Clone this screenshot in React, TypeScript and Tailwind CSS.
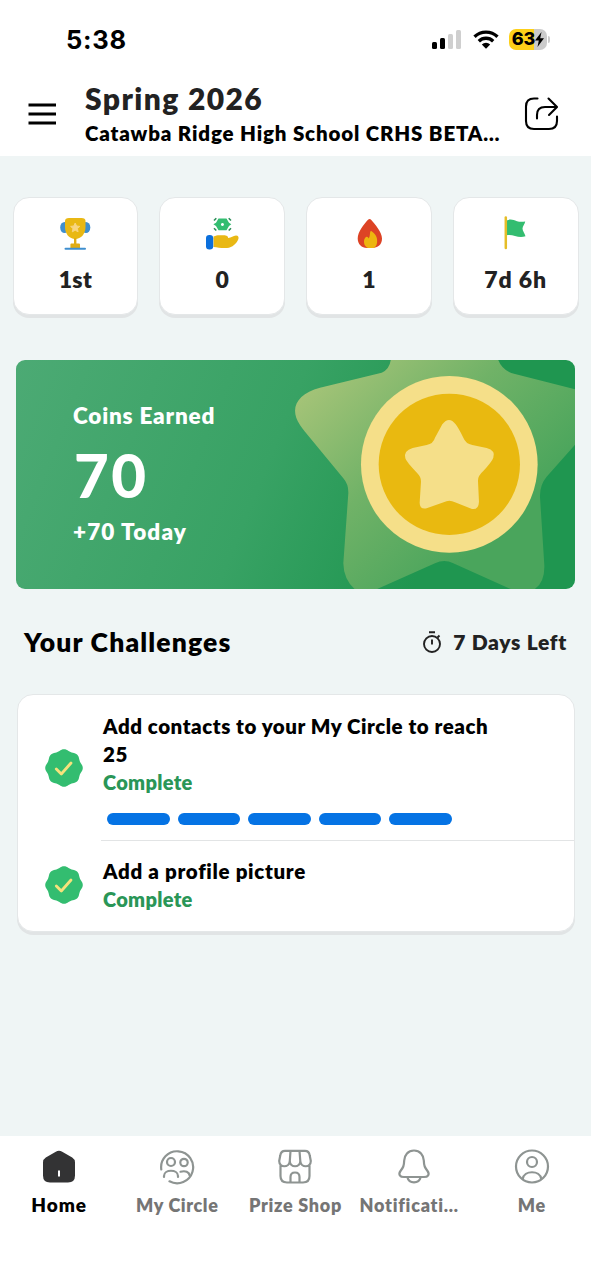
import React from "react";

const Trophy = () => (
  <svg className="h-10 w-10" viewBox="0 0 40 40">
    <ellipse cx="9.500" cy="13.500" rx="4.300" ry="5.500" fill="#3f8fcf" />
    <ellipse cx="31" cy="13.500" rx="4.300" ry="5.500" fill="#3f8fcf" />
    <path d="M10 7Q10 4 14 4H26.500Q30.500 4 30.500 7V13C30.500 20 26 25 20.200 25S10 20 10 13Z" fill="#e9b814" />
    <path d="M19 24h2.400v5.500H24q1 0 1 1v3.500H15.400v-3.500q0-1 1-1h2.600Z" fill="#e0ac14" />
    <path d="M10.500 34.800H30" stroke="#3f8fcf" strokeWidth="2" strokeLinecap="round" />
    <path d="M20.200 9l1.400 3 3.200.4-2.400 2.200.7 3.200-2.900-1.600-2.900 1.600.7-3.200-2.400-2.200 3.200-.4Z" fill="#f8d581" stroke="#f8d581" strokeWidth="1" strokeLinejoin="round" />
  </svg>
);

const MoneyHand = () => (
  <svg className="h-10 w-10" viewBox="0 0 40 40">
    <path fillRule="evenodd" d="M16.500 4.400h8l2.500 4.300 2.300 1.600-2.300 1.600-2.500 4.400h-8L14 11.900l-2.600-1.600L14 8.700Z M20.400 8.900a1.500 1.500 0 1 0 .1 0Z" fill="#33bd70" />
    <path d="M12 6.500l2.300-2.300M26.700 4.200L29 6.500M12 14.200l2.300 2.300M26.700 16.500l2.300-2.300" stroke="#2e8d59" strokeWidth="1.600" />
    <path d="M11.500 22.600C15 20.800 17 21.200 20 21.300c4 0 6 .5 6.200 2.600 3.300 0 4.800-2.400 7.800-2.500 2.300 0 3.200 1.800 2.200 4C34.500 29.300 30.500 33.600 25 33.900c-5 .3-9-.3-13.500-.9Z" fill="#e9b814" />
    <rect x="4" y="21" width="7.200" height="14.500" rx="3.300" fill="#0b6fdc" />
  </svg>
);

const Flame = () => (
  <svg className="h-10 w-10" viewBox="0 0 40 40">
    <path d="M19.300 5.600Q20.800 4.200 22.300 5.900C26 10 33 18 33 24.500 33 30.500 29 34 23 34h-5C12.500 34 8.700 30 8.700 24.500 8.700 18 15 10 19.300 5.600Z" fill="#dd4325" />
    <path d="M22.600 17.200c4.600 3 6 7 5.500 11-.3 3-1.900 5.800-4.200 5.800h-4.500c-2.600-.5-4.400-3.400-4.400-6.300 0-2.200.8-4 2.500-4.900 1-.4 1.600.4 2.100 1.700 1.500-2 1.200-4.600 1.600-6.600.2-.8.700-1.100 1.400-.7Z" fill="#edb50f" />
  </svg>
);

const Flag = () => (
  <svg className="h-10 w-10" viewBox="0 0 40 40">
    <path d="M10 6.800C15 4.500 17 6 21 7.300c3 .8 5.500.5 8.200.2-.2 2.500-2.600 4.700-2.700 7 0 2.500 2 4.500 3 7.700-3.500 1.200-7 .8-10.500-.2-3.500-1-6-1.200-9-.5Z" fill="#33bd70" />
    <path d="M9.800 3.500V34" stroke="#e5bd27" strokeWidth="2.500" strokeLinecap="round" />
  </svg>
);

const stats = [
  { icon: <Trophy />, label: "1st", cls: "tracking-[0.300px]" },
  { icon: <MoneyHand />, label: "0", cls: "" },
  { icon: <Flame />, label: "1", cls: "" },
  { icon: <Flag />, label: "7d 6h", cls: "tracking-[0.900px]" },
];

const scallop = Array.from({ length: 96 }, (_, i) => {
  const a = (i / 96) * Math.PI * 2;
  const r = 18 + 0.8 * Math.cos(8 * a);
  return `${(19 + r * Math.sin(a)).toFixed(2)},${(19 - r * Math.cos(a)).toFixed(2)}`;
}).join(" ");

const Badge = () => (
  <svg className="h-[38px] w-[38px] shrink-0" viewBox="0 0 38 38">
    <polygon points={scallop} fill="#33bd70" />
    <path d="M11.300 20l5 5 9.700-11" fill="none" stroke="#f6e27c" strokeWidth="2.800" strokeLinecap="round" strokeLinejoin="round" />
  </svg>
);

const line = {
  fill: "none",
  stroke: "#8e9492",
  strokeWidth: 2.2,
  strokeLinecap: "round" as const,
  strokeLinejoin: "round" as const,
};

const tabs = [
  {
    label: "Home",
    cls: "text-black text-[19px] tracking-[0.900px]",
    icon: (
      <svg className="h-9 w-9" viewBox="0 0 36 36">
        <path d="M14.800 2.800q3.200-1.900 6.400 0l10 5.800q2.800 1.700 2.800 5V26.500q0 7-7 7H9q-7 0-7-7V13.600q0-3.300 2.800-5Z" fill="#333334" />
        <path d="M18 21.500v6" stroke="#fff" strokeWidth="2" />
      </svg>
    ),
  },
  {
    label: "My Circle",
    cls: "text-[#757575] text-[18px] tracking-[0.600px]",
    icon: (
      <svg className="h-9 w-9" viewBox="0 0 36 36" {...line}>
        <path d="M2.300 20.500A16 16 0 1 1 10.500 32.300" />
        <circle cx="12" cy="13" r="4" />
        <circle cx="25" cy="13.500" r="3.700" />
        <path d="M5 28v-1c0-7 14-7 14 0v1M21.500 22.700c5-1.200 8.500 0 9.300 4" />
      </svg>
    ),
  },
  {
    label: "Prize Shop",
    cls: "text-[#757575] text-[18px] tracking-[0.700px]",
    icon: (
      <svg className="h-9 w-9" viewBox="0 0 36 36" {...line}>
        <path d="M8 1.800h20q4 0 4.700 4.500L33.800 12c0 7-10 7-10.500 0 0 7-10.500 7-10.500 0-.5 7-10.600 7-10.600 0L3.300 6.300Q4 1.800 8 1.800ZM13.500 2l-.7 10M22.500 2l.8 10M3.500 16.500V27q0 6.500 6.500 6.500h16q6.500 0 6.500-6.500V16.500M13.500 33.500V28q0-4.500 4.500-4.500t4.500 4.500v5.500" />
      </svg>
    ),
  },
  {
    label: "Notificati…",
    cls: "text-[#757575] text-[18px] tracking-[0.750px] pr-[9px]",
    icon: (
      <svg className="h-9 w-9" viewBox="0 0 36 36" {...line}>
        <path d="M18 1.500c-6 0-9.500 4.500-9.800 10-.2 5.500-1 7-3.700 10.500-2.500 3.500-.5 6 3.500 6h20c4 0 6-2.500 3.500-6-2.700-3.500-3.500-5-3.700-10.500C27.500 6 24 1.500 18 1.500ZM11.500 28.500c1.500 6.500 11.500 6.500 13 0" />
      </svg>
    ),
  },
  {
    label: "Me",
    cls: "text-[#757575] text-[18px] tracking-[0.800px]",
    icon: (
      <svg className="h-9 w-9" viewBox="0 0 36 36" {...line}>
        <circle cx="18" cy="17.500" r="16" />
        <circle cx="18" cy="13" r="5" />
        <path d="M8.800 30c1-9 17.400-9 18.400 0" />
      </svg>
    ),
  },
];

const StatusBar = () => (
  <div className="flex h-20 items-start justify-between pt-[25px] pr-[41px] pl-[66px]">
    <span className="font-['Inter'] text-[25.500px] leading-[30px] font-bold tracking-[0.700px]">5:38</span>
    <div className="flex h-[30px] items-center">
      <svg className="h-[22px] w-[30px]" viewBox="0 0 30 22">
        <rect x="0" y="13" width="5" height="7" rx="1.500" />
        <rect x="8" y="9" width="5" height="11" rx="1.500" />
        <rect x="16" y="5" width="5" height="15" rx="1.500" fill="#cfcfcf" />
        <rect x="24" y="1" width="5" height="19" rx="1.500" fill="#cfcfcf" />
      </svg>
      <svg className="-mt-[2px] ml-[11px] h-[19px] w-[26px]" viewBox="0 0 26 19">
        <path d="M1.500 6.800a16.500 16.500 0 0 1 23 0M5.800 11.200a10.300 10.300 0 0 1 14.400 0" fill="none" stroke="#000" strokeWidth="3.300" />
        <path d="M8.800 14.400a6 6 0 0 1 8.400 0L13 18.700Z" />
      </svg>
      <div className="-mt-[2px] ml-[10px] flex h-[21px] w-[38px] items-center justify-center rounded-[7px] bg-linear-to-r from-[#fdd019] from-65% to-[#cbcbcb] to-65%">
        <span className="font-['Inter'] text-[18px] leading-none font-extrabold">63</span>
        <svg className="h-[15px] w-[9px]" viewBox="0 0 9 15">
          <path d="M6.500 0L0 8.500h3.800L2.500 15 9 6.300H5.200Z" />
        </svg>
      </div>
      <div className="-mt-[2px] ml-px h-[7px] w-[2px] rounded-r-full bg-[#cbcbcb]" />
    </div>
  </div>
);

export default function App() {
  return (
    <div className="flex h-[1280px] w-[591px] flex-col overflow-hidden bg-[#eff5f5] font-['Lato',sans-serif] font-extrabold text-black">
      <header className="h-[156px] shrink-0 bg-white">
        <StatusBar />
        <div className="flex">
          <svg className="mt-[23px] ml-[28px] h-[22px] w-7" viewBox="0 0 28 22">
            <path d="M.5 2h27.500M.5 11h27.500M.5 20h27.500" stroke="#000" strokeWidth="2.800" />
          </svg>
          <div className="ml-[29px] w-[438px]">
            <h1 className="text-[30px] leading-9 tracking-[1.400px] whitespace-nowrap text-[#222]">Spring 2026</h1>
            <p className="mt-1 text-[20.500px] leading-[26px] tracking-[0.840px] whitespace-nowrap">Catawba Ridge High School CRHS BETA…</p>
          </div>
          <svg className="mt-[16px] h-9 w-9" viewBox="0 0 36 36" fill="none" stroke="#000" strokeWidth="2.100" strokeLinecap="round" strokeLinejoin="round">
            <path d="M14.500 2.500H11Q3 2.500 3 10.500V25q0 8 8 8h15q8 0 8-8v-4.500M14 22.500v-3.500q0-8 8-8h11.500M25.500 2.500l8.500 8.500-8 8" />
          </svg>
        </div>
      </header>

      <main className="flex-1">
        <section className="mt-[41px] grid grid-cols-4 gap-x-[21px] px-[12.500px]">
          {stats.map((s) => (
            <div key={s.label} className="flex h-[118px] flex-col items-center rounded-2xl border border-[#e4e7e8] bg-white pt-[16px] shadow-[0_3px_0_#e1e4e5]">
              {s.icon}
              <span className={"mt-[11px] text-[23px] leading-7 text-[#222] " + s.cls}>{s.label}</span>
            </div>
          ))}
        </section>

        <section className="relative mt-[45px] ml-4 h-[229px] w-[559px] overflow-hidden rounded-[9px] bg-linear-[112deg] from-[#4caa74] via-[#38a264] via-45% to-[#1f9650] to-75% pt-[40px] pl-[57px] text-white">
          <svg className="absolute inset-0 h-full w-full" viewBox="0 0 559 229">
            <defs>
              <linearGradient id="glow" x1="0.050" y1="0.100" x2="0.750" y2="0.700">
                <stop offset="0" stopColor="#a6c478" />
                <stop offset="0.500" stopColor="#70b267" />
                <stop offset="1" stopColor="#4aa55c" />
              </linearGradient>
            </defs>
            <g transform="translate(269 -10) scale(.3333)">
              <path d="M318 25Q315 58 290 68L105 113C35 132 12 175 45 225Q52 236 60 245L175 385Q191 403 190 430L175 640Q176 690 212 720H270L450 640Q478 626 505 640L665 712Q680 720 700 720H745Q780 700 778 645L765 440Q764 405 785 380L880 273V120L690 72Q650 63 638 25Z" fill="url(#glow)" />
              <circle cx="493" cy="343" r="265" fill="#f5df89" />
              <circle cx="493" cy="343" r="212" fill="#e9b910" />
              <path d="M472 223Q492 197 512 223Q520 233 535 263Q542 281 562 285L605 294Q633 302 625 323Q622 333 595 363Q578 378 579 392L582 455Q581 480 561 477L510 457Q493 447 476 457L425 475Q404 479 404 458L408 395Q409 382 397 370Q363 334 361 325Q355 302 383 294L425 285Q445 281 450 263Z" fill="#f5df89" />
            </g>
          </svg>
          <p className="relative text-[22.500px] leading-8 tracking-[0.800px]">Coins Earned</p>
          <p className="relative mt-[8px] ml-[1px] text-[60px] leading-[70px] font-black tracking-[2.500px]">70</p>
          <p className="relative mt-[6px] text-[22.500px] leading-8 tracking-[1.100px]">+70 Today</p>
        </section>

        <div className="mt-[35px] flex h-9 items-center pr-6 pl-6">
          <h2 className="text-[26.500px] leading-9 tracking-[1.150px]">Your Challenges</h2>
          <div className="ml-auto flex items-center text-[#222]">
            <svg className="mr-[11px] h-6 w-5" viewBox="0 0 20 24" fill="none" stroke="#222" strokeWidth="1.900">
              <circle cx="10" cy="14" r="8" />
              <path d="M7 2.200h6M10 9.500v5M15.500 7.500l2-2" />
            </svg>
            <span className="text-[21px] leading-9 tracking-[0.700px]">7 Days Left</span>
          </div>
        </div>

        <section className="mt-[34px] mr-4 ml-[16.500px] h-[238px] rounded-2xl border border-[#e4e7e8] bg-white shadow-[0_3px_0_#e1e4e5]">
          <div className="flex h-[146px] items-center pl-[27px]">
            <Badge />
            <div className="ml-[18px] flex h-full flex-1 flex-col border-b border-[#e2e4e5] pt-[17px] pl-[2.500px]">
              <p className="text-[20.500px] leading-[28px] tracking-[0.540px]">Add contacts to your My Circle to reach<br />25</p>
              <p className="text-[20px] leading-7 tracking-[0.300px] text-[#2a9657]">Complete</p>
              <div className="mt-[17px] ml-[4px] flex gap-2">
                {[1, 2, 3, 4, 5].map((n) => (
                  <div key={n} className="h-3 w-[62.600px] rounded-full bg-[#0573e4]" />
                ))}
              </div>
            </div>
          </div>
          <div className="flex h-[88px] items-center pl-[27px]">
            <Badge />
            <div className="ml-[20.500px]">
              <p className="text-[20.500px] leading-7 tracking-[0.680px]">Add a profile picture</p>
              <p className="text-[20px] leading-7 tracking-[0.300px] text-[#2a9657]">Complete</p>
            </div>
          </div>
        </section>
      </main>

      <nav className="grid h-[144px] shrink-0 grid-cols-5 bg-white pt-[13px]">
        {tabs.map((t) => (
          <div key={t.label} className="flex flex-col items-center">
            {t.icon}
            <span className={"mt-[8px] leading-6 whitespace-nowrap " + t.cls}>{t.label}</span>
          </div>
        ))}
      </nav>
    </div>
  );
}
